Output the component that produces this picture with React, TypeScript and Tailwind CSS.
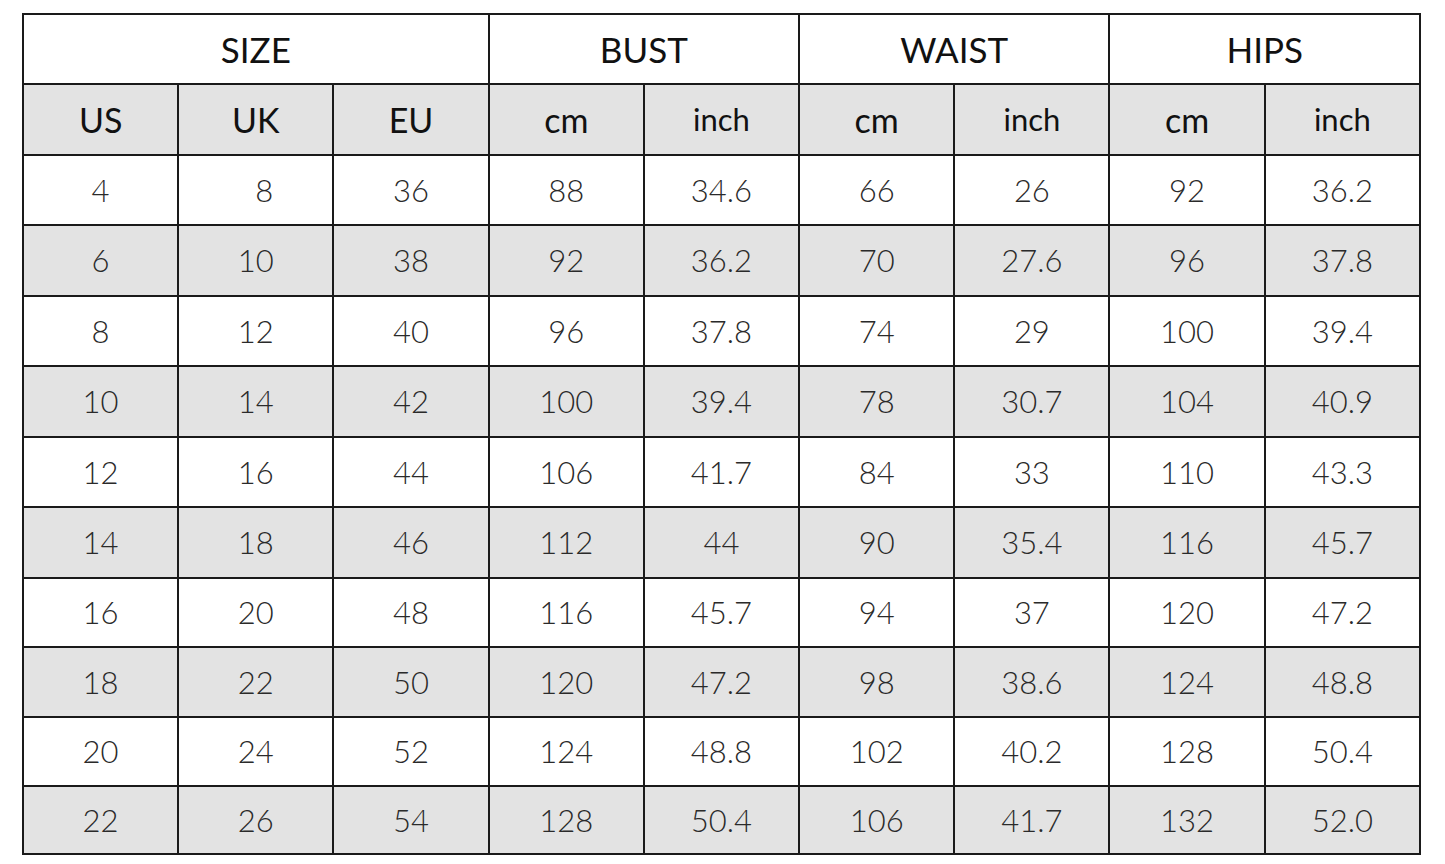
const rows: string[][] = [
  ["4", "\u00a0\u00a08", "36", "88", "34.6", "66", "26", "92", "36.2"],
  ["6", "10", "38", "92", "36.2", "70", "27.6", "96", "37.8"],
  ["8", "12", "40", "96", "37.8", "74", "29", "100", "39.4"],
  ["10", "14", "42", "100", "39.4", "78", "30.7", "104", "40.9"],
  ["12", "16", "44", "106", "41.7", "84", "33", "110", "43.3"],
  ["14", "18", "46", "112", "44", "90", "35.4", "116", "45.7"],
  ["16", "20", "48", "116", "45.7", "94", "37", "120", "47.2"],
  ["18", "22", "50", "120", "47.2", "98", "38.6", "124", "48.8"],
  ["20", "24", "52", "124", "48.8", "102", "40.2", "128", "50.4"],
  ["22", "26", "54", "128", "50.4", "106", "41.7", "132", "52.0"],
];

const units = ["US", "UK", "EU", "cm", "inch", "cm", "inch", "cm", "inch"];

const rowHeights = ["h-[70px]", "h-[71px]", "h-[70px]", "h-[71px]", "h-[70px]", "h-[71px]", "h-[69px]", "h-[70px]", "h-[69px]", "h-[68px]"];

export default function App() {
  return (
    <div className="w-[1445px] h-[864px] bg-white pt-[13px] pl-[22px]" style={{ fontFamily: 'Lato, "Open Sans", sans-serif' }}>
      <table className="border-collapse table-fixed w-[1399px] border-2 border-[#1a1a1a]">
        <colgroup>
          {units.map((_, i) => (
            <col key={i} className="w-[155px]" />
          ))}
        </colgroup>
        <thead>
          <tr className="h-[70px] bg-white text-[#111] text-[35px]">
            <th colSpan={3} className="border-2 border-[#1a1a1a] font-normal">SIZE</th>
            <th colSpan={2} className="border-2 border-[#1a1a1a] font-normal">BUST</th>
            <th colSpan={2} className="border-2 border-[#1a1a1a] font-normal">WAIST</th>
            <th colSpan={2} className="border-2 border-[#1a1a1a] font-normal">HIPS</th>
          </tr>
          <tr className="h-[71px] bg-[#e3e3e3] text-[#111]">
            {units.map((u, i) => (
              <th key={i} className={`border-2 border-[#1a1a1a] font-normal ${u === "inch" ? "text-[31px]" : "text-[34px]"}`}>
                {u}
              </th>
            ))}
          </tr>
        </thead>
        <tbody>
          {rows.map((r, ri) => (
            <tr key={ri} className={`${rowHeights[ri]} ${ri % 2 === 1 ? "bg-[#e3e3e3]" : "bg-white"}`}>
              {r.map((v, ci) => (
                <td key={ci} className="border-2 border-[#1a1a1a] text-center text-[31px] font-light text-[#2a2a2a]">
                  {v}
                </td>
              ))}
            </tr>
          ))}
        </tbody>
      </table>
    </div>
  );
}
